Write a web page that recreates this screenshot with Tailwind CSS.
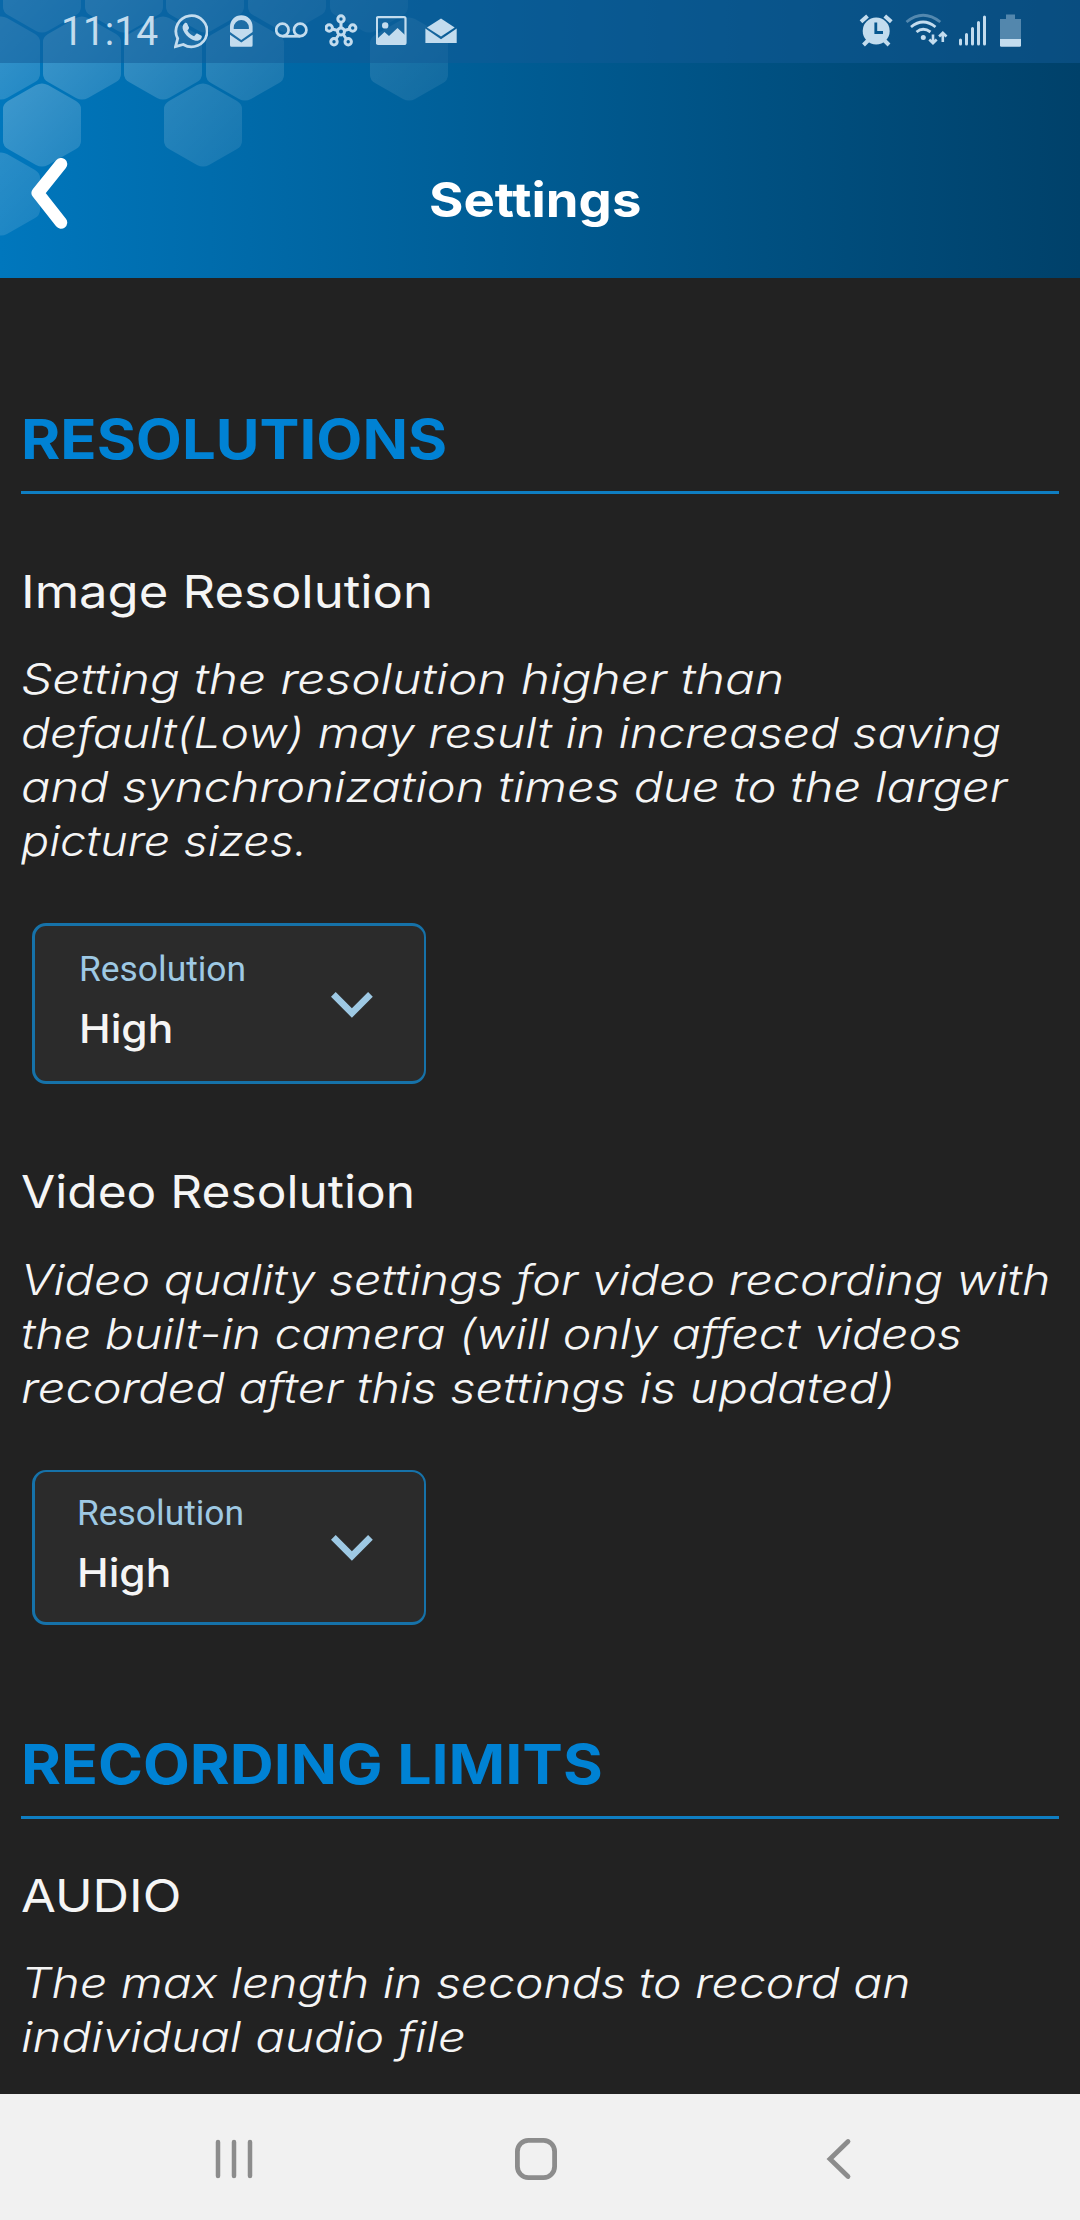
<!DOCTYPE html>
<html lang="en">
<head>
<meta charset="utf-8">
<title>Settings</title>
<script src="https://cdn.jsdelivr.net/npm/@tailwindcss/browser@4"></script>
</head>
<body class="w-[1080px] h-[2220px] overflow-hidden flex flex-col bg-[#222222] text-[#f5f5f5] font-[Inter,sans-serif]">

<header class="relative h-[278px] shrink-0 bg-linear-to-r from-[#0077bd] via-[#005b92] to-[#00416a] overflow-hidden">
  <!-- honeycomb decoration -->
  <svg class="absolute left-0 top-0" width="460" height="278" viewBox="0 0 460 278">
    <defs>
      <linearGradient id="g" x1="0" y1="0" x2="1" y2="1"><stop offset="0" stop-color="#fff" stop-opacity=".25"/><stop offset="1" stop-color="#fff" stop-opacity=".13"/></linearGradient>
      <path id="h" fill="url(#g)" d="M-6-40Q0-43 6-40L34-24Q39-21 39-16V16Q39 21 34 24L6 40Q0 43-6 40L-34 24Q-39 21-39 16V-16Q-39-21-34-24Z"/>
    </defs>
    <use href="#h" x="42" y="-9"/><use href="#h" x="124" y="-9"/><use href="#h" x="205" y="-9" opacity=".85"/><use href="#h" x="287" y="-9" opacity=".7"/><use href="#h" x="369" y="-9" opacity=".5"/>
    <use href="#h" x="1" y="58"/><use href="#h" x="82" y="58"/><use href="#h" x="163" y="58" opacity=".9"/><use href="#h" x="245" y="59" opacity=".75"/><use href="#h" x="409" y="59" opacity=".5"/>
    <use href="#h" x="42" y="125"/><use href="#h" x="203" y="125" opacity=".65"/>
    <use href="#h" x="1" y="194" opacity=".75"/>
  </svg>

  <div class="relative h-[63px] flex bg-[#125a96]/50 text-[#c3dcee]">
    <span class="ml-[61px] w-[113px] pt-[8px] text-[40px] leading-[48px] font-normal font-[Roboto,sans-serif] whitespace-nowrap"><span class="inline-block origin-left scale-x-[0.975]">11:14</span></span>
    <svg width="34" height="63" viewBox="174 0 34 63" fill="none" stroke="currentColor">
      <path stroke-width="2.8" d="M175.5 46.6l2.2-8.1A15.6 15.6 0 1 1 183.300 44.500Z"/>
      <path fill="currentColor" stroke="none" d="M184.600 23.300c.8-.7 1.900-.6 2.400 0l2 4.200c.3.800-.8 2-1.600 2.900 1.500 2.800 3.800 4.600 6.700 5.900l2-2.200c.5-.6 1-.6 1.600-.3l3.800 2c.7.500.2 2.200-.5 3.100-2.700 2.700-6.300 2-9.900 0-3.600-2-6.200-4.800-7.800-8.300-1.200-2.800-1-5.400 1.300-7.300Z"/>
    </svg>
    <svg class="ml-[22px]" width="23" height="63" viewBox="230 0 23 63" fill="currentColor">
      <path fill-rule="evenodd" d="M230 32V26.500a11.300 11.300 0 0 1 22.600 0V32L241.300 40ZM233.700 29h15.200v-1.500a7.600 7.600 0 0 0-15.200 0Z"/>
      <path d="M230 34.700l11.300 7.800 11.300-7.800V45.200q0 1.500-1.500 1.500H231.500q-1.500 0-1.500-1.500Z"/>
    </svg>
    <svg class="ml-[22px]" width="33" height="63" viewBox="275 0 33 63" fill="none" stroke="currentColor" stroke-width="2.700">
      <circle cx="282.400" cy="29.900" r="6.200"/><circle cx="300.200" cy="29.900" r="6.200"/><path d="M282.400 36.300H300.200"/>
    </svg>
    <svg class="ml-[17px]" width="33" height="63" viewBox="325 0 33 63" fill="none" stroke="currentColor" stroke-width="3">
      <circle cx="341" cy="31.500" r="3.500"/><circle cx="341" cy="19" r="3.200"/><circle cx="329.200" cy="28" r="3.200"/><circle cx="352.700" cy="28" r="3.200"/><circle cx="334" cy="41.700" r="3.200"/><circle cx="348.200" cy="41.700" r="3.200"/>
      <path d="M341 22.200V28M332.300 29l5.400 1.500M349.700 29l-5.400 1.500M335.900 39l3-4.500M346.300 39l-3-4.500"/>
    </svg>
    <svg class="ml-[18px]" width="31" height="63" viewBox="376 0 31 63" fill="currentColor">
      <rect x="376.900" y="17.100" width="28.600" height="26.800" rx="1.500" fill="none" stroke="currentColor" stroke-width="2.200"/>
      <circle cx="385.200" cy="25.400" r="3.200"/><path d="M377 39l7.500-7 4.500 4 8.500-8 8 7.500V44H377Z"/>
    </svg>
    <svg class="ml-[18px]" width="32" height="63" viewBox="425 0 32 63" fill="currentColor">
      <path d="M441 18.500L454.700 27.500 441 36.500 427 27.500Z"/><path d="M425.400 28.500L441 39.200 456.700 28.500V43H425.400Z"/>
    </svg>

    <svg class="ml-[402px]" width="34" height="63" viewBox="858 0 34 63" fill="none" stroke="currentColor" stroke-linecap="butt">
      <path stroke-width="4" d="M860 21.800l6.500-5.800M890.300 21.800l-6.500-5.800M862.500 45l5-5M888 45l-5-5"/>
      <circle cx="875.200" cy="31" r="13.500" fill="currentColor" stroke="none"/>
      <path stroke="#08578f" stroke-width="2.800" d="M874.800 22.500V32.500H882"/>
    </svg>
    <svg class="ml-[12px]" width="43" height="63" viewBox="903 0 43 63" fill="none" stroke="currentColor" stroke-width="2.800">
      <path opacity=".4" d="M904.500 22Q921 8.500 938.300 22"/><path d="M909 27Q921 17 933.500 27M914.500 32Q921 26.500 928.500 32"/>
      <circle cx="921.300" cy="37.500" r="2.500" fill="currentColor" stroke="none"/>
      <path stroke-width="2.600" d="M931 34.500V42M927.300 39.500L931 43.200 934.700 39.500M940.800 42V34.500M937.100 36.500L940.800 32.800 944.500 36.500"/>
    </svg>
    <svg class="ml-[11px]" width="28" height="63" viewBox="957 0 28 63" stroke="currentColor" stroke-width="3" stroke-linecap="round">
      <path d="M958.500 40V44M964.500 34.500V44M970.500 28.500V44M976.500 22.500V44M982.500 17V44"/>
    </svg>
    <svg class="ml-[13px]" width="21" height="63" viewBox="998 0 21 63" fill="currentColor">
      <path opacity=".4" d="M1004 19V14.500H1013V19H1019V39H998V19Z"/><path d="M998 39H1019V45.500q0 1.300-1.300 1.300H999.300q-1.300 0-1.300-1.300Z"/>
    </svg>
  </div>

  <div class="relative flex pl-[31px] pt-[95px] text-white">
    <svg width="37" height="71" viewBox="31 158 37 71" fill="none" stroke="currentColor" stroke-width="12.500" stroke-linecap="round" stroke-linejoin="round"><path d="M61 164.200L37.800 193 61 222.500"/></svg>
    <h1 class="ml-[361px] mt-[13px] text-[48px] leading-[58px] font-bold origin-left scale-x-[1.097]">Settings</h1>
  </div>
</header>

<main class="h-[1816px] shrink-0 overflow-hidden pl-[21px] pr-[21px] pt-[131px] flex flex-col">
  <h2 class="border-b-[3px] border-[#0f7ec2] pb-[22px] text-[55px] leading-[60px] font-bold text-[#0082d4]"><span class="block origin-left scale-x-[1.088]">RESOLUTIONS</span></h2>

  <h3 class="mt-[68px] text-[45px] leading-[60px] font-normal origin-left scale-x-[1.128]">Image Resolution</h3>
  <p class="mt-[30px] text-[42px] leading-[54px] italic font-light whitespace-nowrap">
    <span class="block origin-left scale-x-[1.183]">Setting the resolution higher than</span>
    <span class="block origin-left scale-x-[1.146]">default(Low) may result in increased saving</span>
    <span class="block origin-left scale-x-[1.163]">and synchronization times due to the larger</span>
    <span class="block origin-left scale-x-[1.113]">picture sizes.</span>
  </p>
  <div class="mt-[55px] ml-[11px] w-[394px] h-[161px] flex items-start justify-between rounded-[14px] border-[3px] border-r-2 border-[#1672a9] bg-[#2b2b2b] pl-[44px] pr-[51px] pt-[22px]">
    <div class="flex flex-col gap-4">
      <span class="text-[35.4px] leading-[42px] font-[Roboto,sans-serif] text-[#9ec9e4]">Resolution</span>
      <span class="text-[39px] leading-[46px] font-medium origin-left scale-x-[1.090]">High</span>
    </div>
    <svg class="mt-[44px]" width="42" height="26" viewBox="0 0 42 26"><path fill="#9ec9e4" d="M0 4.800L4.700 0 20.900 16.200 37.100 0 41.800 4.800 20.900 25.700Z"/></svg>
  </div>

  <h3 class="mt-[78px] text-[45px] leading-[60px] font-normal origin-left scale-x-[1.103]">Video Resolution</h3>
  <p class="mt-[31px] text-[42px] leading-[54px] italic font-light whitespace-nowrap">
    <span class="block origin-left scale-x-[1.151]">Video quality settings for video recording with</span>
    <span class="block origin-left scale-x-[1.149]">the built-in camera (will only affect videos</span>
    <span class="block origin-left scale-x-[1.161]">recorded after this settings is updated)</span>
  </p>
  <div class="mt-[55px] ml-[11px] w-[394px] h-[155px] flex items-start justify-between rounded-[14px] border-[3px] border-r-2 border-t-2 border-[#1672a9] bg-[#2b2b2b] pl-[42px] pr-[51px] pt-[20px]">
    <div class="flex flex-col gap-4">
      <span class="text-[35.4px] leading-[42px] font-[Roboto,sans-serif] text-[#9ec9e4]">Resolution</span>
      <span class="text-[39px] leading-[46px] font-medium origin-left scale-x-[1.090]">High</span>
    </div>
    <svg class="mt-[43px]" width="42" height="26" viewBox="0 0 42 26"><path fill="#9ec9e4" d="M0 4.800L4.700 0 20.900 16.200 37.100 0 41.800 4.800 20.900 25.700Z"/></svg>
  </div>

  <h2 class="mt-[109px] border-b-[3px] border-[#0f7ec2] pb-[22px] text-[55px] leading-[60px] font-bold text-[#0082d4]"><span class="block origin-left scale-x-[1.106]">RECORDING LIMITS</span></h2>
  <h3 class="mt-[47px] text-[45px] leading-[60px] font-normal origin-left scale-x-[1.124]">AUDIO</h3>
  <p class="mt-[30px] text-[42px] leading-[54px] italic font-light whitespace-nowrap">
    <span class="block origin-left scale-x-[1.145]">The max length in seconds to record an</span>
    <span class="block origin-left scale-x-[1.172]">individual audio file</span>
  </p>
</main>

<nav class="h-[126px] shrink-0 flex items-center pt-[4px] bg-[#f1f1f1] text-[#8c8c8c]">
  <svg class="ml-[215px]" width="38" height="42" viewBox="0 0 38 42" stroke="currentColor" stroke-width="4.500" stroke-linecap="round"><path d="M3 4V38M19 4V38M35 4V38"/></svg>
  <svg class="ml-[262px]" width="42" height="42" viewBox="0 0 42 42" fill="none" stroke="currentColor" stroke-width="4.800"><rect x="2.400" y="2.400" width="37.200" height="37.200" rx="11"/></svg>
  <svg class="ml-[269px]" width="26" height="42" viewBox="0 0 26 42" fill="none" stroke="currentColor" stroke-width="4.800" stroke-linecap="round"><path d="M22 3.500L4 21 22 38.500"/></svg>
</nav>
</body>
</html>
